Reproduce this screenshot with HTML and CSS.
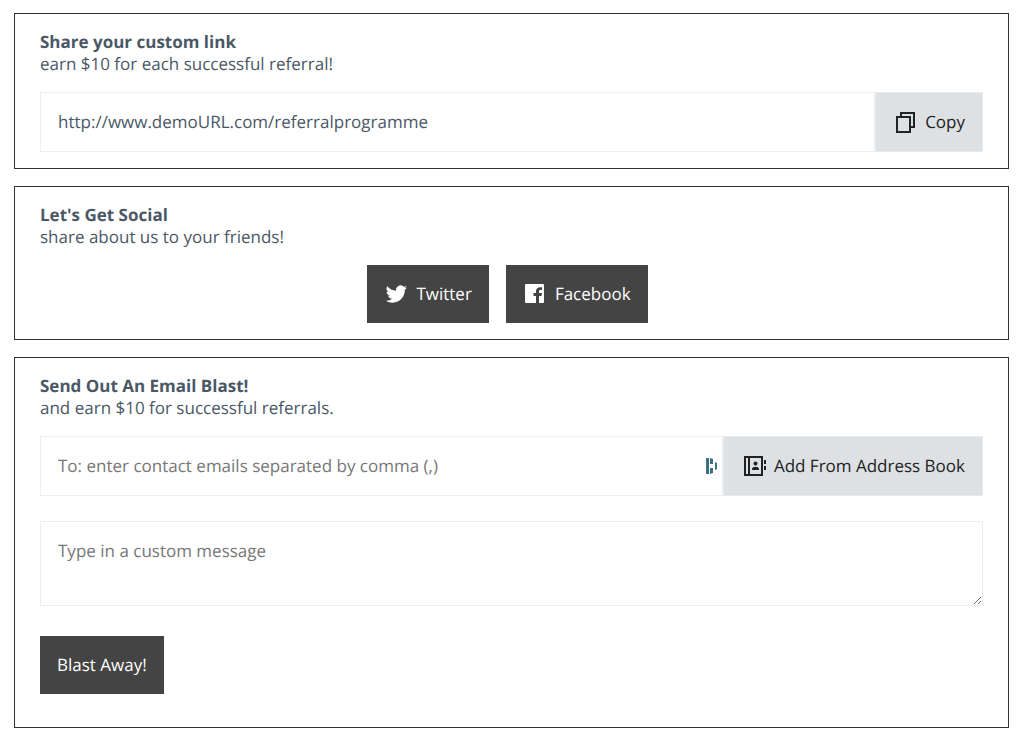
FILE: index.html
```html
<!DOCTYPE html>
<html lang="en">
<head>
    <meta charset="UTF-8">
    <meta name="viewport" content="width=device-width, initial-scale=1.0">
    <title>Referral Programme</title>
    <link rel="stylesheet" href="styles.css">
</head>
<body>
    <section class="card">
        <h2>Share your custom link</h2>
        <p>earn $10 for each successful referral!</p>

        <div class="input-group">
            <input type="text" class="field" value="http://www.demoURL.com/referralprogramme" aria-label="Your custom link" readonly>
            <button type="button" class="btn-light">
                <svg class="icon icon-copy" viewBox="0 0 19 21" fill="none" stroke="currentColor" stroke-width="2">
                    <path d="M1 5h13v15H1z"/>
                    <path d="M5 5V1h13v14h-4"/>
                </svg>
                Copy
            </button>
        </div>
    </section>

    <section class="card">
        <h2>Let's Get Social</h2>
        <p>share about us to your friends!</p>

        <div class="social">
            <button type="button" class="btn-dark">
                <svg class="icon icon-social" viewBox="-2 0 26 24" fill="currentColor">
                    <path d="M23.95 4.57a10 10 0 0 1-2.82.77 4.96 4.96 0 0 0 2.16-2.72c-.95.55-2 .96-3.13 1.18a4.92 4.92 0 0 0-8.38 4.48C7.69 8.1 4.07 6.13 1.64 3.16a4.92 4.92 0 0 0 1.52 6.57 4.9 4.9 0 0 1-2.23-.61v.06a4.92 4.92 0 0 0 3.95 4.83 5 5 0 0 1-2.21.08 4.94 4.94 0 0 0 4.6 3.42A9.87 9.87 0 0 1 0 19.54a14 14 0 0 0 7.55 2.21c9.05 0 14-7.5 14-13.98 0-.21 0-.42-.02-.63a9.94 9.94 0 0 0 2.42-2.57z"/>
                </svg>
                Twitter
            </button>
            <button type="button" class="btn-dark">
                <svg class="icon icon-social" viewBox="0 0 23 22" fill="currentColor">
                    <path d="M3 1h17a1 1 0 0 1 1 1v17a1 1 0 0 1-1 1h-4v-7h2.500l.4-3H16V8.500c0-1 .4-1.500 1.500-1.500H19V4.300c-3.500-.5-6 .5-6 4V10h-2.500v3H13v7H3a1 1 0 0 1-1-1V2a1 1 0 0 1 1-1z"/>
                </svg>
                Facebook
            </button>
        </div>
    </section>

    <form class="card card-email">
        <h2>Send Out An Email Blast!</h2>
        <p>and earn $10 for successful referrals.</p>

        <div class="input-group">
            <div class="field-wrap">
                <input type="text" class="field" placeholder="To: enter contact emails separated by comma (,)" aria-label="Contact emails">
                <svg class="autofill" viewBox="0 0 12 16" fill="#3b7083">
                    <path d="M0 0h3v16H0zM4 0l3 1v5H4zM4 10h3v5l-3 1zM9 4l2 1v6l-2 1z"/>
                </svg>
            </div>
            <button type="button" class="btn-light btn-book">
                <svg class="icon icon-book" viewBox="0 0 23 22">
                    <g fill="none" stroke="currentColor" stroke-width="2">
                        <path d="M1 2h17v18H1zM5 2v18"/>
                    </g>
                    <g fill="currentColor">
                        <circle cx="11.500" cy="8.500" r="2"/>
                        <path d="M8 15v-1c0-3 7-3 7 0v1zM20 5h2v4h-2zM20 11h2v4h-2z"/>
                    </g>
                </svg>
                Add From Address Book
            </button>
        </div>

        <textarea class="field message" placeholder="Type in a custom message" aria-label="Custom message"></textarea>

        <button type="submit" class="btn-dark">Blast Away!</button>
    </form>
</body>
</html>
```
FILE: styles.css
```css
* {
    box-sizing: border-box;
}

body {
    margin: 0;
    padding: 13px 15px 16px 14px;
    display: flex;
    flex-direction: column;
    gap: 17px;
    background-color: #fff;
    font-family: "Open Sans", sans-serif;
    font-size: 17px;
    line-height: 22px;
    text-rendering: geometricPrecision;
    color: #4a5866;
}

.card {
    border: 1px solid #333;
    padding: 17px 25px 16px;
}

.card-email {
    padding-bottom: 33px;
}

.card h2 {
    margin: 0;
    font-size: 17px;
    font-weight: bold;
}

.card p {
    margin: 0 0 17px;
}

input,
textarea,
button {
    font: inherit;
    text-rendering: inherit;
    border-radius: 0;
}

.input-group {
    display: flex;
}

.field {
    display: block;
    flex: 1;
    width: 100%;
    min-width: 0;
    padding: 18px 17px;
    border: 1px solid #eee;
    background-color: #fff;
    color: #4a5866;
}

.field::placeholder {
    color: #777;
}

.field-wrap {
    position: relative;
    flex: 1;
}

.autofill {
    position: absolute;
    right: 5px;
    top: 22px;
    width: 12px;
    height: 16px;
}

button {
    display: flex;
    align-items: center;
    cursor: pointer;
}

.btn-light {
    height: 60px;
    gap: 10px;
    padding: 0 17px 0 20px;
    border: 1px solid #e8eaec;
    background-color: #dde1e4;
    color: #222;
}

.btn-book {
    gap: 7px;
}

.input-group .field {
    height: 60px;
    padding: 0 17px 2px;
}

.btn-dark {
    height: 58px;
    gap: 9px;
    padding: 0 17px;
    border: none;
    background-color: #444;
    color: #fff;
}

.icon {
    flex: none;
}

.icon-copy {
    width: 19px;
    height: 21px;
}

.icon-social,
.icon-book {
    width: 23px;
    height: 22px;
}

.social {
    display: flex;
    justify-content: center;
    gap: 17px;
    padding-right: 8px;
}

.message {
    height: 85px;
    margin: 25px 0 30px;
    resize: vertical;
}
```
